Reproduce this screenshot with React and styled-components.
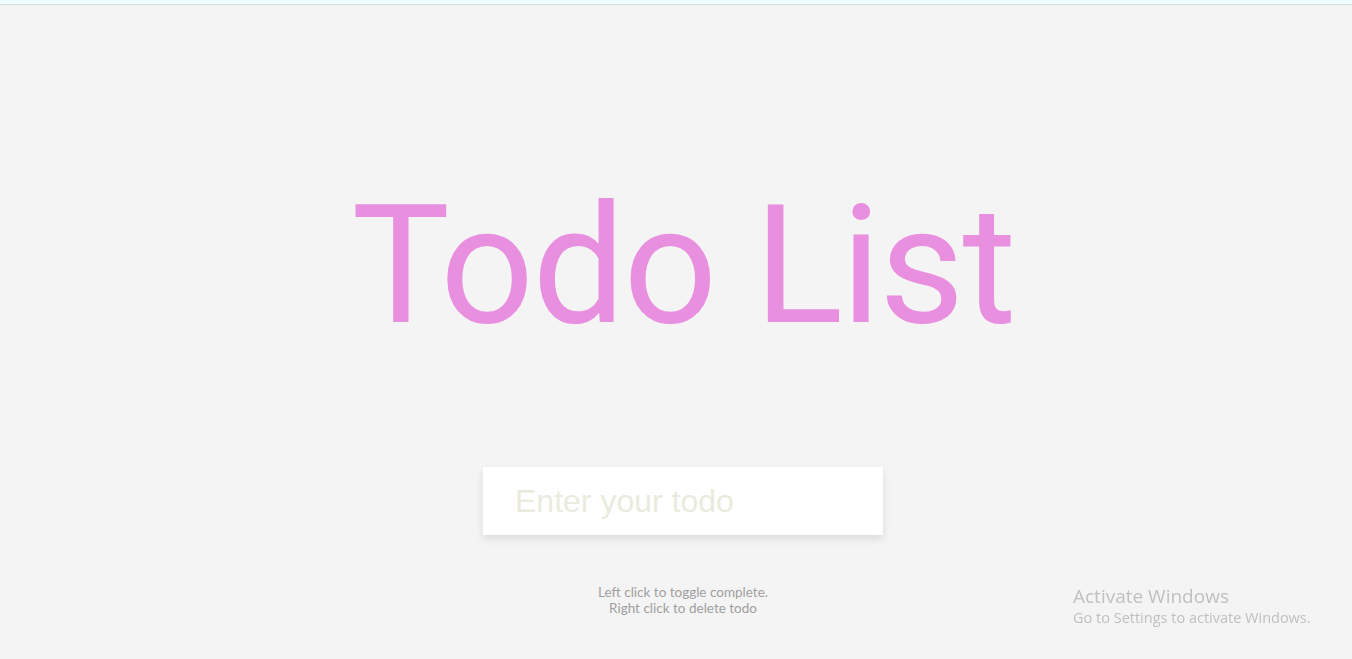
import React from "react";
import styled, { createGlobalStyle } from "styled-components";

const GlobalStyle = createGlobalStyle`
    html, body {
        margin: 0;
        padding: 0;
        background: #f4f4f4;
        height: 100%;
        overflow: hidden;
    }
`

const App = () => {
    return (
        <Page>
            <GlobalStyle />
            <TopStrip />
            <Main>
                <Title>Todo List</Title>
                <Form onSubmit={(e) => e.preventDefault()}>
                    <TodoInput type="text" placeholder="Enter your todo" />
                </Form>
                <Help>
                    Left click to toggle complete.
                    <br />
                    Right click to delete todo
                </Help>
            </Main>
            <Watermark>
                <WatermarkTitle>Activate Windows</WatermarkTitle>
                <WatermarkText>Go to Settings to activate Windows.</WatermarkText>
            </Watermark>
        </Page>
    );
};

const Page = styled.div`

    min-height: 100vh;
    background: #f4f4f4;
    display: flex;
    flex-direction: column;

`
const TopStrip = styled.div`

    height: 4px;
    background: #effdff;
    border-bottom: 1px solid #d6dcdf;

`
const Main = styled.div`

    display: flex;
    flex-direction: column;
    align-items: center;
    padding-top: 178px;
    padding-left: 14px;

`
const Title = styled.h1`

    margin: 0;
    font-family: Roboto, "Liberation Sans", sans-serif;
    font-weight: 400;
    font-size: 165px;
    line-height: 1;
    letter-spacing: -2px;
    color: #e98fdf;

`
const Form = styled.form`

    margin-top: 119px;
    display: flex;

`
const TodoInput = styled.input`

    width: 400px;
    height: 68px;
    box-sizing: border-box;
    border: none;
    outline: none;
    background: #fff;
    padding: 0 32px;
    font-family: "Liberation Sans", Arial, sans-serif;
    font-size: 32px;
    color: #555;
    box-shadow: 0 4px 8px rgba(0, 0, 0, 0.1);

    &::placeholder {
        color: #ebebdd;
    }

`
const Help = styled.p`

    margin: 49px 0 0;
    font-family: Lato, "Open Sans", sans-serif;
    font-size: 13.5px;
    line-height: 16px;
    color: #a0a0a0;
    text-align: center;

`
const Watermark = styled.div`

    position: fixed;
    left: 1073px;
    top: 584px;
    font-family: "Open Sans", "Noto Sans", sans-serif;
    color: #c0c0c0;
    pointer-events: none;

`
const WatermarkTitle = styled.div`

    font-size: 19px;
    line-height: 24px;

`
const WatermarkText = styled.div`

    font-size: 14.5px;
    line-height: 20px;

`

export default App;
